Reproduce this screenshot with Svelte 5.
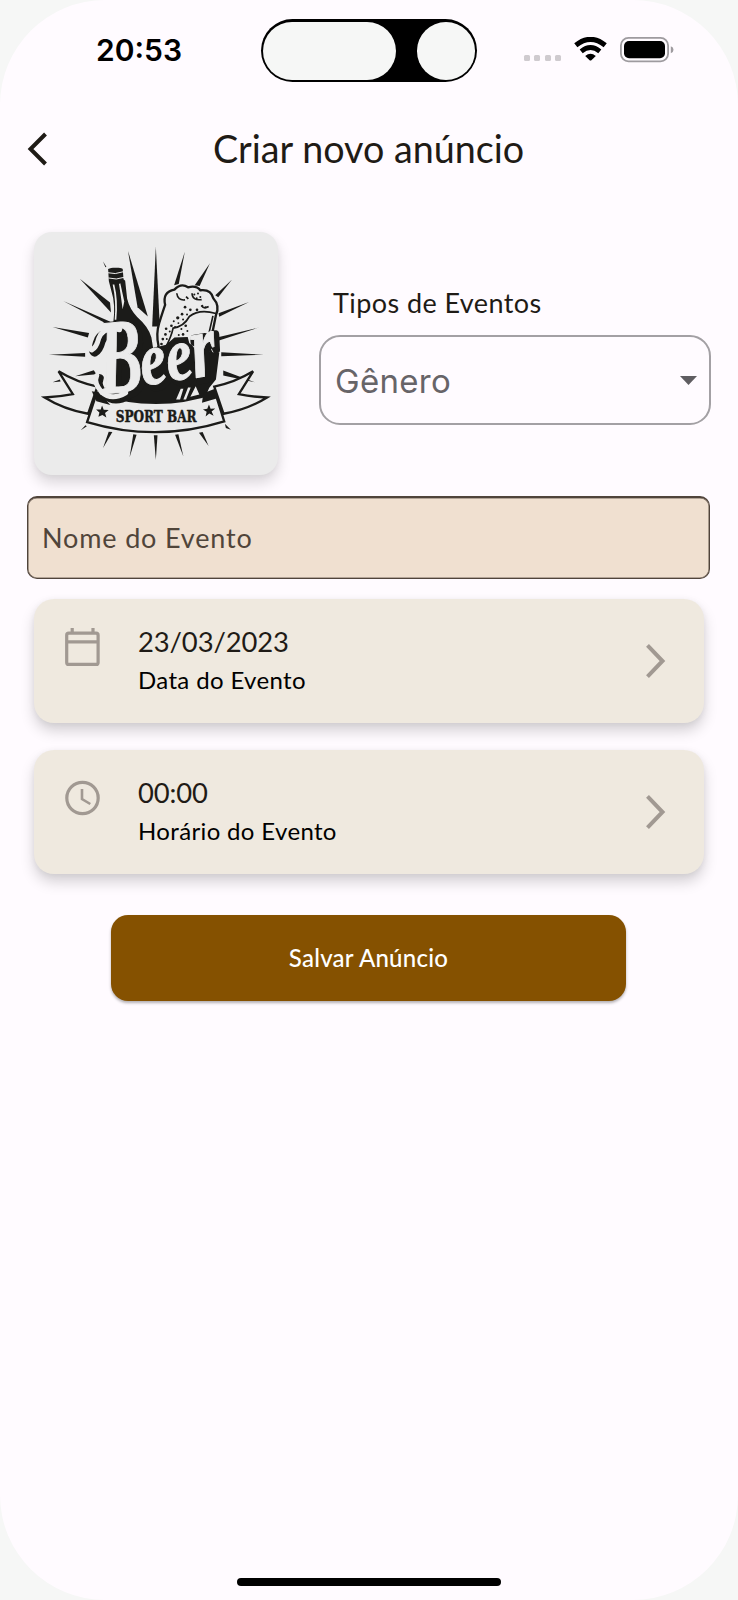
<script>
  const rows = [
    { icon: 'calendar', value: '23/03/2023', label: 'Data do Evento' },
    { icon: 'clock', value: '00:00', label: 'Horário do Evento' }
  ];
  const rays = [
    '409,80 398,320 421,320', '325,92 354,262 385,290', '496,96 464,196 478,192',
    '572,130 526,196 541,198', '638,179 588,226 597,232', '690,246 598,280 600,291',
    '720,323 580,356 576,370', '734,405 606,398 606,410', '707,488 612,453 612,468',
    '250,124 257,142 260,140', '180,176 271,248 274,278', '130,243 272,306 268,316',
    '98,322 208,340 204,353', '87,405 196,400 196,411', '98,488 120,480 122,486',
    '166,470 222,452 230,464', '183,633 197,618 201,621', '250,686 267,637 278,638',
    '330,714 341,645 351,646', '409,722 403,648 414,648', '492,712 467,646 477,645',
    '568,680 539,640 550,638', '635,631 617,613 620,626'
  ];
  const bubbles = [
    [497, 262, 4], [513, 270, 4], [533, 270, 4], [488, 283, 4], [503, 284, 3], [475, 294, 5],
    [463, 304, 3], [477, 310, 3], [491, 299, 3], [456, 318, 4], [467, 322, 3], [440, 327, 4],
    [451, 335, 3], [438, 344, 4], [430, 358, 4], [442, 358, 3], [426, 373, 4], [499, 318, 4],
    [486, 328, 3], [504, 334, 3], [491, 344, 4], [478, 346, 3], [525, 224, 3], [536, 221, 3],
    [543, 231, 3], [532, 235, 3], [549, 258, 3], [559, 262, 3]
  ];
  const swash = 'M286 322Q240 310 218 350Q203 385 216 391Q230 384 237 356Q252 318 300 330M231 468Q221 490 245 517Q275 545 318 520';
</script>

<div class="screen">
  <header class="status">
    <span class="time">20:53</span>
    <div class="island"><i class="pill"></i><i class="lens"></i></div>
    <div class="signals">
      <span class="dots"><i></i><i></i><i></i><i></i></span>
      <svg class="wifi" viewBox="0 0 33 24">
        <path d="M1.8 8.2 Q16.5-3.6 31.2 8.2" fill="none" stroke="#000" stroke-width="5" />
        <path d="M7.2 14.4 Q16.5 6.8 25.8 14.4" fill="none" stroke="#000" stroke-width="4.8" />
        <path d="M11.2 18.9Q16.5 14.8 21.8 18.9L17.4 23.2Q16.5 24 15.6 23.2Z" />
      </svg>
      <svg class="battery" viewBox="0 0 54 26">
        <rect x=".9" y=".9" width="47.2" height="23.4" rx="7.6" fill="none" stroke="#9e9b9f" stroke-width="1.8" />
        <rect x="4" y="4" width="41" height="17.2" rx="5" />
        <path d="M50.8 9.2Q53.5 10 53.5 12.7T50.8 16.2Z" fill="#9e9b9f" />
      </svg>
    </div>
  </header>

  <nav class="bar">
    <svg class="back" viewBox="0 0 22 34"><path d="M18.5 2L3.5 17L18.5 32" fill="none" stroke="#1f1b16" stroke-width="4" /></svg>
    <h1>Criar novo anúncio</h1>
  </nav>

  <main>
    <section class="top">
      <div class="logo">
        <svg viewBox="42 36 735 731">
          <g fill="#1b1b19">{#each rays as points}<polygon {points} />{/each}</g>
          <!-- bottle -->
          <path d="M262 150Q258 142 285 139Q314 139 313 149L315 176L320 181L326 236Q333 266 356 290Q390 320 399 352L405 390L390 550H280L272 340Q285 280 277 235L264 184Z" fill="#1b1b19" stroke="#ebebeb" stroke-width="7" />
          <path d="M263 158Q286 165 312 155M266 174Q290 181 314 172" fill="none" stroke="#ebebeb" stroke-width="3" />
          <path d="M279 194Q290 244 285 300L290 300Q296 242 284 194ZM302 190L314 245L309 268Q304 230 298 192Z" fill="#ebebeb" />
          <!-- mug -->
          <path d="M417 378Q409 342 419 310Q430 275 437 255Q428 216 465 209Q485 188 506 202Q531 195 543 211Q575 207 582 235Q603 258 590 286L570 385L590 430L500 530H380Z" fill="#ebebeb" stroke="#1b1b19" stroke-width="7" />
          <path d="M590 281Q540 266 510 290Q494 320 461 325Q456 350 438 384M581 288L560 380M472 220Q475 243 497 240M500 230L507 237M518 220Q519 243 547 239M546 257Q554 269 568 260" fill="none" stroke="#1b1b19" stroke-width="5" />
          <g fill="#1b1b19">{#each bubbles as [cx, cy, r]}<circle {cx} {cy} {r} />{/each}</g>
          <path d="M440 375L465 353L505 352L515 390L600 400L590 480L570 505L550 550H300L280 490L340 400Z" fill="#1b1b19" />
          <!-- ribbon -->
          <g fill="#ebebeb" stroke="#1b1b19" stroke-width="7">
            <path d="M233 501Q172 489 116 455L159 524Q120 532 74 534Q132 570 205 583Z" />
            <path d="M585 501Q646 489 702 455L659 524Q698 532 744 534Q686 570 613 583Z" />
            <path d="M231 520Q410 580 588 520L615 606Q410 670 202 608Z" />
          </g>
          <path d="M216 515L240 520L272 557L230 545ZM589 507L552 521L548 550L592 537Z" fill="#1b1b19" />
          <!-- lettering -->
          <g class="beer">
            <g class="shade" transform="translate(9 8)">
              <path d={swash} fill="none" stroke-linecap="round" />
              <g transform="rotate(-5 300 430)"><text x="236" y="518" class="big" textLength="132" lengthAdjust="spacingAndGlyphs">B</text></g>
              <g transform="rotate(-10 440 440)"><text x="363" y="486" class="small" textLength="158" lengthAdjust="spacingAndGlyphs">ee</text><text x="519" y="490" class="tail" textLength="78" lengthAdjust="spacingAndGlyphs">r</text></g>
            </g>
            <g class="face">
              <path d={swash} class="stroke" fill="none" stroke-linecap="round" />
              <g transform="rotate(-5 300 430)"><text x="236" y="518" class="big" textLength="132" lengthAdjust="spacingAndGlyphs">B</text></g>
              <g transform="rotate(-10 440 440)"><text x="363" y="486" class="small" textLength="158" lengthAdjust="spacingAndGlyphs">ee</text><text x="519" y="490" class="tail" textLength="78" lengthAdjust="spacingAndGlyphs">r</text></g>
            </g>
          </g>
          <path d="M470 540L484 508H492L482 540ZM492 540L506 504H514L500 540ZM513 532L529 500L540 525Z" fill="#ebebeb" />
          <text x="288" y="608" class="sport" textLength="244" lengthAdjust="spacingAndGlyphs">SPORT BAR</text>
          <path d="M247 558L252 571L267 572L256 581L260 594L248 587L236 592L239 579L229 570L243 570Z" fill="#1b1b19" />
          <path d="M569 555L574 568L588 567L577 576L583 589L570 582L559 591L562 577L551 570L564 568Z" fill="#1b1b19" />
        </svg>
      </div>
      <div class="types">
        <span class="types-label">Tipos de Eventos</span>
        <div class="select">
          <span>Gênero</span>
          <svg viewBox="0 0 17 9"><path d="M0 0H17L8.5 9Z" fill="#5f5d61" /></svg>
        </div>
      </div>
    </section>

    <div class="name"><span>Nome do Evento</span></div>

    {#each rows as row}
      <section class="card">
        {#if row.icon === 'calendar'}
          <svg class="icon" viewBox="0 0 36 40" fill="none" stroke="#a19992">
            <rect x="1.7" y="5.2" width="31.4" height="31.2" rx="2" stroke-width="3.2" />
            <path d="M2 13.8H33M7.2 0V5M28 0V5" stroke-width="3.2" />
          </svg>
        {:else}
          <svg class="icon" viewBox="0 0 36 40" fill="none" stroke="#a19992">
            <circle cx="17.5" cy="19" r="15.7" stroke-width="3.2" />
            <path d="M17 10V20L25.3 25" stroke-width="2.6" />
          </svg>
        {/if}
        <div class="copy">
          <span class="value">{row.value}</span>
          <span class="label">{row.label}</span>
        </div>
        <svg class="chevron" viewBox="0 0 21 36"><path d="M2.5 2.4L17.5 18L2.5 33.6" fill="none" stroke="#a19992" stroke-width="4" /></svg>
      </section>
    {/each}

    <button>Salvar Anúncio</button>
  </main>
  <footer><i></i></footer>
</div>

<style>
  :global(body) { background: #f6f7f6; }
  * { box-sizing: border-box; }
  .screen { width: 738px; height: 1600px; background: #fffbff; border-radius: 105px; display: flex; flex-direction: column; font-family: Lato, sans-serif; color: #1f1b16; overflow: hidden; }
  svg { display: block; flex: none; }
  .status { height: 102px; display: grid; grid-template-columns: 261px 216px 1fr; }
  .time { padding: 30px 0 0 96px; font: 600 30px/40px Inter, sans-serif; color: #000; }
  .island { margin-top: 19px; height: 63px; border-radius: 32px; background: #000; display: flex; justify-content: space-between; padding: 2.5px 2px; }
  .pill { width: 133px; height: 58px; border-radius: 29px; background: #f6f7f6; }
  .lens { width: 58.5px; height: 58px; border-radius: 50%; background: #f6f7f6; }
  .signals { display: flex; padding: 37px 0 0 47px; }
  .dots { display: flex; gap: 4.3px; padding-top: 18px; width: 50px; }
  .dots i { width: 6px; height: 6px; border-radius: 1.5px; background: #cfcbcf; }
  .wifi { width: 33px; height: 24px; }
  .battery { width: 54px; height: 26px; margin-left: 13px; }
  .bar { height: 94px; display: flex; align-items: center; padding-left: 27px; }
  .back { width: 22px; height: 34px; }
  h1 { margin: -1px 0 0 164px; font-size: 37.7px; font-weight: 400; line-height: 46px; white-space: nowrap; }
  main { padding: 36px 27px 0; display: flex; flex-direction: column; }
  .top { display: flex; height: 264px; padding-left: 7px; }
  .logo { width: 244px; height: 243px; border-radius: 18px; overflow: hidden; background: #ebebeb; box-shadow: 0 8px 14px rgba(0,0,0,.15), 0 1px 6px rgba(0,0,0,.04); }
  .logo svg { width: 244px; height: 243px; }
  .big { font-size: 322px; }
  .small { font-size: 225px; }
  .tail { font-size: 275px; }
  .beer { font-family: "Liberation Serif", serif; font-style: italic; font-weight: 700; stroke-linejoin: round; }
  .shade { fill: #1b1b19; stroke: #1b1b19; stroke-width: 24px; }
  .face { fill: #ebebeb; stroke: #ebebeb; stroke-width: 3px; }
  .stroke { stroke-width: 15px; }
  .sport { font: 700 49px "DejaVu Serif", serif; fill: #1b1b19; stroke: #1b1b19; stroke-width: 1.5px; }
  .types { margin-left: 41px; width: 392px; padding-top: 53px; }
  .types-label { display: block; padding-left: 14px; height: 50px; line-height: 36px; font-size: 27px; letter-spacing: .42px; }
  .select { height: 90px; border: 2px solid #a3a0a4; border-radius: 21px; padding: 1px 12px 0 14px; display: flex; align-items: center; justify-content: space-between; font: 400 33px/40px Inter, sans-serif; letter-spacing: .3px; color: #676468; }
  .select svg { width: 17px; height: 9px; }
  .name { width: 683px; height: 82.5px; margin-bottom: .5px; border: 1px solid #50443b; border-top-width: 2px; border-radius: 10px; background: #f0e0d0; box-shadow: inset 0 0 0 .6px #76695e; display: flex; align-items: center; padding-left: 14px; font-size: 27px; letter-spacing: .85px; color: #50453a; }
  .card { margin: 20px 7px 7px; height: 124px; width: 670px; border-radius: 20px; background: #efe9df; display: flex; padding-left: 31px; box-shadow: 0 8px 14px rgba(0,0,0,.17), 0 1px 6px rgba(0,0,0,.05); }
  .icon { width: 36px; height: 40px; margin-top: 29px; }
  .copy { display: flex; flex-direction: column; margin-left: 37px; padding-top: 25px; width: 507px; }
  .value { font-size: 27.4px; line-height: 36px; height: 37px; letter-spacing: -.1px; }
  .label { font-size: 24px; line-height: 38px; color: #000; letter-spacing: .35px; }
  .chevron { width: 21px; height: 36px; margin-top: 44px; }
  button { align-self: center; margin: 34px 1px 0 0; width: 515px; height: 86px; border: 0; border-radius: 17px; padding: 0 0 2px; background: #855100; color: #fff; font: 500 24px Lato, sans-serif; letter-spacing: .25px; box-shadow: 0 2px 3px rgba(0,0,0,.3); }
  footer { margin-top: auto; height: 22.5px; display: flex; justify-content: center; }
  footer i { width: 264px; height: 8.5px; border-radius: 4px; background: #000; }
</style>
